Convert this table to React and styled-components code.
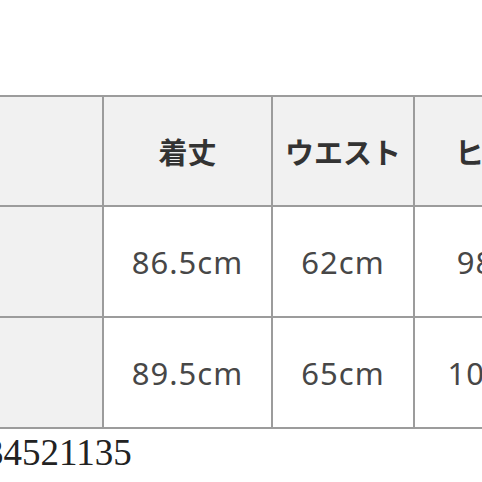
import styled, { createGlobalStyle } from 'styled-components';

const GlobalStyle = createGlobalStyle`
    html, body {
        margin: 0;
        padding: 0;
        background: #ffffff;
        overflow: hidden;
    }
`;

const Page = styled.div`
    width: 482px;
    height: 482px;
    overflow: hidden;
    padding-top: 95px;
    box-sizing: border-box;
`;

const SizeTable = styled.div`
    display: grid;
    grid-template-columns: 200px 167px 140px 167px;
    grid-auto-rows: 108px 109px 109px;
    gap: 2px;
    padding: 2px;
    margin-left: -100px;
    width: max-content;
    background: #9c9c9c;
`;

const Cell = styled.div`
    display: flex;
    align-items: center;
    justify-content: center;
    background: ${({ $shade }) => ($shade ? '#f1f1f1' : '#ffffff')};
    color: ${({ $head }) => ($head ? '#333333' : '#474747')};
    font-family: ${({ $head }) =>
        $head ? '"Noto Sans CJK JP", sans-serif' : '"Noto Sans", "Noto Sans CJK JP", sans-serif'};
    font-size: ${({ $head }) => ($head ? '29px' : '31px')};
    font-weight: ${({ $head }) => ($head ? 700 : 400)};
    letter-spacing: ${({ $head }) => ($head ? '0' : '1px')};
    white-space: nowrap;
    overflow: hidden;
`;

const Note = styled.div`
    margin: 5px 0 0 -15px;
    font-family: "Liberation Serif", serif;
    font-size: 37px;
    line-height: 37px;
    color: #222222;
`;

const head = ['', '着丈', 'ウエスト', 'ヒップ'];
const rows = [
    ['', '86.5cm', '62cm', '98cm'],
    ['', '89.5cm', '65cm', '100cm'],
];

const App = () => {
    return (
        <Page>
            <GlobalStyle />
            <SizeTable>
                {head.map((h, i) => (
                    <Cell key={'h' + i} $head $shade>{h}</Cell>
                ))}
                {rows.map((r, ri) =>
                    r.map((v, ci) => (
                        <Cell key={ri + '-' + ci} $shade={ci === 0}>{v}</Cell>
                    ))
                )}
            </SizeTable>
            <Note>34521135</Note>
        </Page>
    );
};

export default App;
